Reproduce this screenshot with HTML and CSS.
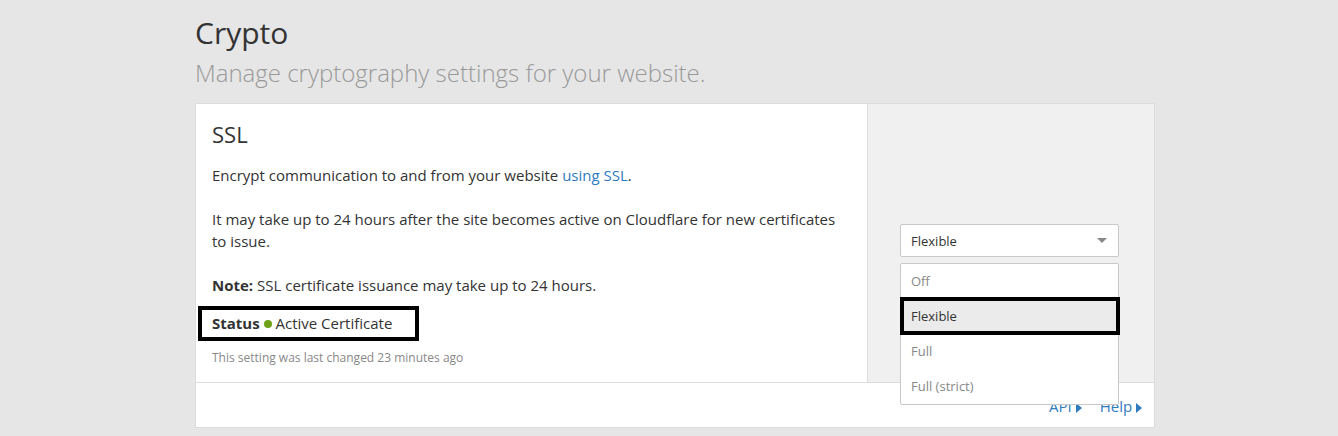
FILE: index.html
```html
<!DOCTYPE html>
<html lang="en">
<head>
<meta charset="utf-8">
<title>Crypto</title>
<link rel="stylesheet" href="styles.css">
</head>
<body>
<div class="page">
  <header class="page-head">
    <h1 class="title">Crypto</h1>
    <p class="subtitle">Manage cryptography settings for your website.</p>
  </header>

  <section class="card">
    <div class="card-main">
      <div class="card-body">
        <h3 class="card-title">SSL</h3>
        <p class="text">Encrypt communication to and from your website <a class="link" href="#">using SSL</a>.</p>
        <p class="text gap">It may take up to 24 hours after the site becomes active on Cloudflare for new certificates to issue.</p>
        <p class="text gap"><strong>Note:</strong> SSL certificate issuance may take up to 24 hours.</p>
        <div class="status"><strong>Status</strong> <span class="dot"></span> Active Certificate</div>
        <p class="changed">This setting was last changed 23 minutes ago</p>
      </div>
      <div class="card-control">
        <div class="select-wrap">
          <div class="select">
            <span>Flexible</span>
            <span class="caret"></span>
          </div>
          <ul class="menu">
            <li class="opt">Off</li>
            <li class="opt sel">Flexible</li>
            <li class="opt">Full</li>
            <li class="opt">Full (strict)</li>
          </ul>
        </div>
      </div>
    </div>
    <footer class="card-foot">
      <a class="foot-link" href="#">API <span class="tri"></span></a>
      <a class="foot-link" href="#">Help <span class="tri"></span></a>
    </footer>
  </section>
</div>
</body>
</html>
```

FILE: styles.css
```css
* { box-sizing: border-box; }
html, body { margin: 0; padding: 0; }
body {
  background: #e6e6e6;
  font-family: "Open Sans", "Noto Sans", sans-serif;
  color: #333;
  height: 436px;
  overflow: hidden;
}
.page {
  width: 960px;
  margin-left: 195px;
  padding-top: 13px;
}
.title {
  margin: 0;
  font-size: 30px;
  font-weight: 400;
  line-height: 40px;
  color: #333;
}
.subtitle {
  margin: 4px 0 0;
  font-size: 24px;
  font-weight: 300;
  line-height: 32px;
  color: #999;
}
.card {
  margin-top: 14px;
  background: #fff;
  border: 1px solid #dcdcdc;
}
.card-main {
  display: flex;
  border-bottom: 1px solid #dcdcdc;
}
.card-body {
  flex: 1;
  padding: 17px 16px 16px 16px;
}
.card-title {
  margin: 0 0 17px;
  font-size: 22px;
  font-weight: 400;
  line-height: 26px;
  color: #333;
}
.text {
  margin: 0;
  font-size: 15px;
  line-height: 22px;
  color: #333;
}
.text.gap { margin-top: 22px; }
.text strong, .status strong { font-weight: 700; }
.link { color: #2f7bbf; text-decoration: none; }
.status {
  display: inline-block;
  margin: 10px 0 0 -14px;
  padding: 2px 23px 3px 10px;
  border: 4px solid #000;
  font-size: 15px;
  line-height: 22px;
  color: #333;
}
.dot {
  display: inline-block;
  width: 8px;
  height: 8px;
  border-radius: 50%;
  background: #6ea118;
  vertical-align: 1px;
}
.changed {
  margin: 9px 0 0;
  font-size: 12px;
  line-height: 16px;
  color: #888;
}
.card-control {
  width: 287px;
  background: #f0f0f0;
  border-left: 1px solid #dcdcdc;
  display: flex;
  align-items: center;
  justify-content: center;
  padding: 0 3px 5px 0;
}
.select-wrap {
  position: relative;
  width: 219px;
}
.select {
  height: 33px;
  background: #fff;
  border: 1px solid #c8c8c8;
  border-radius: 2px;
  display: flex;
  align-items: center;
  justify-content: space-between;
  padding: 0 10px 0 10px;
  font-size: 13px;
  color: #333;
}
.caret {
  width: 0;
  height: 0;
  border-left: 5px solid transparent;
  border-right: 5px solid transparent;
  border-top: 5px solid #888;
  margin-right: 1px;
}
.menu {
  position: absolute;
  left: 0;
  top: 39px;
  width: 219px;
  margin: 0;
  padding: 0;
  list-style: none;
  background: #fff;
  border: 1px solid #c8c8c8;
  border-radius: 2px;
  z-index: 2;
}
.opt {
  height: 35px;
  line-height: 35px;
  padding-left: 10px;
  font-size: 13px;
  color: #888;
}
.opt.sel {
  background: #ebebeb;
  color: #333;
  border: 4px solid #000;
  height: 38px;
  line-height: 30px;
  margin: -2px -2px -1px -1px;
  padding-left: 7px;
  position: relative;
}
.card-foot {
  height: 44px;
  display: flex;
  justify-content: flex-end;
  align-items: center;
  gap: 18px;
  padding: 0 12px 0 0;
}
.foot-link {
  color: #2f7bbf;
  text-decoration: none;
  font-size: 15px;
  line-height: 20px;
  margin-top: 2px;
}
.tri {
  display: inline-block;
  width: 0;
  height: 0;
  border-top: 5px solid transparent;
  border-bottom: 5px solid transparent;
  border-left: 6px solid #2f7bbf;
  vertical-align: -1px;
}
```
